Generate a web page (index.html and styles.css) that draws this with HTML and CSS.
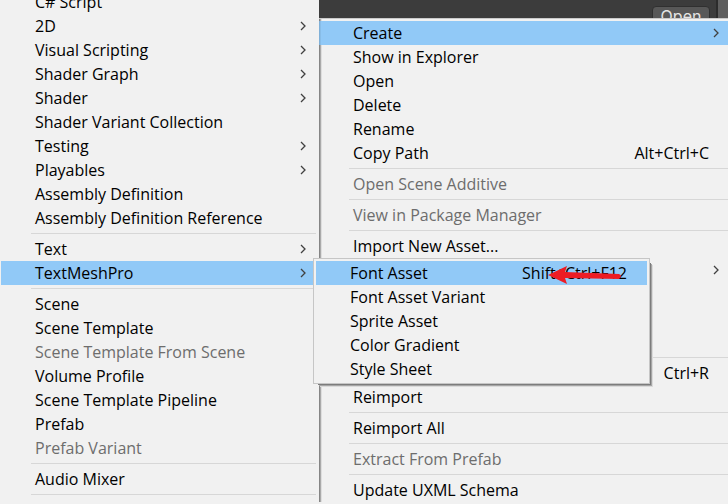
FILE: index.html
```html
<!DOCTYPE html>
<html lang="en">
<head>
<meta charset="utf-8">
<title>Asset menu</title>
<link rel="stylesheet" href="styles.css">
</head>
<body>
<svg class="defs" aria-hidden="true"><symbol id="chevron" viewBox="0 0 6 10"><path d="M1 1 L5 5 L1 9" fill="none" stroke="#404040" stroke-width="1.3"/></symbol></svg>
<main class="workspace">
  <ul class="menu create-menu">
    <li><button class="item">C# Script</button></li>
    <li><button class="item">2D<svg class="chevron"><use href="#chevron"/></svg></button></li>
    <li><button class="item">Visual Scripting<svg class="chevron"><use href="#chevron"/></svg></button></li>
    <li><button class="item">Shader Graph<svg class="chevron"><use href="#chevron"/></svg></button></li>
    <li><button class="item">Shader<svg class="chevron"><use href="#chevron"/></svg></button></li>
    <li><button class="item">Shader Variant Collection</button></li>
    <li><button class="item">Testing<svg class="chevron"><use href="#chevron"/></svg></button></li>
    <li><button class="item">Playables<svg class="chevron"><use href="#chevron"/></svg></button></li>
    <li><button class="item">Assembly Definition</button></li>
    <li><button class="item">Assembly Definition Reference</button></li>
    <li class="separator"></li>
    <li><button class="item">Text<svg class="chevron"><use href="#chevron"/></svg></button></li>
    <li class="parent"><button class="item active">TextMeshPro<svg class="chevron"><use href="#chevron"/></svg></button>
      <ul class="menu submenu">
        <li><button class="item active">Font Asset<span class="shortcut">Shift+Ctrl+F12</span></button>
          <svg class="arrow" viewBox="0 0 74 18" aria-hidden="true"><path d="M0 9 L19 0 L17 6 L71 8 Q75 10 71 13 L17 12 L19 18 Z" fill="#ed1c24"/></svg></li>
        <li><button class="item">Font Asset Variant</button></li>
        <li><button class="item">Sprite Asset</button></li>
        <li><button class="item">Color Gradient</button></li>
        <li><button class="item">Style Sheet</button></li>
      </ul>
    </li>
    <li class="separator"></li>
    <li><button class="item">Scene</button></li>
    <li><button class="item">Scene Template</button></li>
    <li><button class="item" disabled>Scene Template From Scene</button></li>
    <li><button class="item">Volume Profile</button></li>
    <li><button class="item">Scene Template Pipeline</button></li>
    <li><button class="item">Prefab</button></li>
    <li><button class="item" disabled>Prefab Variant</button></li>
    <li class="separator"></li>
    <li><button class="item">Audio Mixer</button></li>
    <li class="separator"></li>
  </ul>
  <section class="context">
    <header class="editor"><button class="open-button">Open</button><span class="side-panel"></span></header>
    <ul class="menu asset-menu">
      <li><button class="item active">Create<svg class="chevron"><use href="#chevron"/></svg></button></li>
      <li><button class="item">Show in Explorer</button></li>
      <li><button class="item">Open</button></li>
      <li><button class="item">Delete</button></li>
      <li><button class="item">Rename</button></li>
      <li><button class="item">Copy Path<span class="shortcut">Alt+Ctrl+C</span></button></li>
      <li class="separator"></li>
      <li><button class="item" disabled>Open Scene Additive</button></li>
      <li class="separator"></li>
      <li><button class="item" disabled>View in Package Manager</button></li>
      <li class="separator"></li>
      <li><button class="item">Import New Asset...</button></li>
      <li class="covered"><svg class="chevron"><use href="#chevron"/></svg></li>
      <li class="separator"></li>
      <li><button class="item"><span class="shortcut">Ctrl+R</span></button></li>
      <li><button class="item">Reimport</button></li>
      <li class="separator"></li>
      <li><button class="item">Reimport All</button></li>
      <li class="separator"></li>
      <li><button class="item" disabled>Extract From Prefab</button></li>
      <li class="separator"></li>
      <li><button class="item">Update UXML Schema</button></li>
    </ul>
  </section>
</main>
</body>
</html>
```
FILE: styles.css
```css
* { box-sizing: border-box; }
body {
  margin: 0;
  height: 100vh;
  overflow: hidden;
  background: #f1f1f1;
  font: 16px/24px "Open Sans", "Noto Sans", sans-serif;
}
.defs { display: none; }
.workspace {
  display: grid;
  grid-template-columns: 319px 1fr;
  height: 100%;
}
.menu { margin: 0; padding: 0; list-style: none; background: #f1f1f1; }
.item {
  display: flex;
  align-items: center;
  width: 100%;
  height: 24px;
  margin: 0;
  padding: 0 13px 0 34px;
  border: 0;
  background: none;
  color: #000;
  font: inherit;
  text-align: left;
  white-space: nowrap;
}
.item:disabled { color: #6d6d6d; }
.item.active { background: #91c9f7; }
.chevron { flex: none; width: 6px; height: 10px; margin-left: auto; }
.shortcut { margin-left: auto; }
.separator {
  height: 7px;
  padding: 3px 0 3px 30px;
  background: #d7d7d7 content-box;
}
.create-menu {
  position: relative;
  z-index: 1;
  height: calc(100% + 10px);
  margin-top: -10px;
  padding: 0 3px 0 1px;
}
.create-menu > li > .item { padding-right: 10px; }
.parent { position: relative; }
.submenu {
  position: absolute;
  top: -3px;
  left: calc(100% - 3px);
  width: 337px;
  padding: 2px;
  border: 1px solid #c6c6c6;
  box-shadow: 3px 3px 0 -2px #7c7c7c, 4px 4px 0 -2px #a5a5a5, 5px 5px 0 -2px #dadada;
}
.submenu > li { position: relative; }
.submenu .item { padding-right: 20px; }
.arrow {
  position: absolute;
  top: 5px;
  right: 25px;
  width: 74px;
  height: 18px;
}
.context { min-width: 0; }
.editor {
  display: flex;
  justify-content: flex-end;
  align-items: flex-start;
  gap: 6px;
  height: 18px;
  overflow: hidden;
  background: #3c3c3c;
}
.open-button {
  width: 58px;
  height: 24px;
  margin-top: 6px;
  padding: 0;
  border: 1px solid #303030;
  border-radius: 4px;
  background: #585858;
  color: #e4e4e4;
  font: 16px/18px Inter, sans-serif;
  display: flex;
  justify-content: center;
}
.side-panel { width: 12px; height: 18px; border-left: 2px solid #2c2c2c; background: #5f5f5f; }
.asset-menu {
  padding-top: 2px;
  border-top: 1px solid #cacaca;
  box-shadow: inset 1px 0 #858585, inset 2px 0 #aaa, inset 3px 0 #dedede;
}
.asset-menu .item { padding: 0 9px 0 34px; }
.asset-menu .item.active { box-shadow: inset 1px 0 #7fb0d8, inset 2px 0 #88bdE8; }
.asset-menu .shortcut { padding-right: 10px; }
.covered { display: flex; height: 96px; padding: 7px 9px 0 0; }
```
